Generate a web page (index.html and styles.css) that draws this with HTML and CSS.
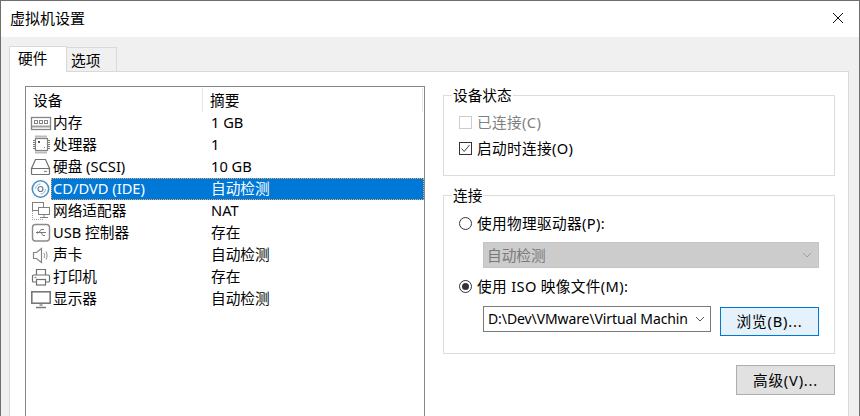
FILE: index.html
```html
<!DOCTYPE html>
<html lang="zh-CN">
<head>
<meta charset="utf-8">
<title>虚拟机设置</title>
<link rel="stylesheet" href="styles.css">
</head>
<body>
<div class="window">
  <header class="titlebar">
    <span class="title">虚拟机设置</span>
    <svg class="close" width="12" height="12" viewBox="0 0 12 12"><path d="M1 1 11 11M11 1 1 11" stroke="#111" fill="none"/></svg>
  </header>
  <div class="body">
    <div class="tabs">
      <div class="tab active">硬件</div>
      <div class="tab">选项</div>
    </div>
    <div class="panel">
      <div class="list">
        <div class="list-head"><span class="h-name">设备</span><span class="h-sum">摘要</span></div>
        <div class="row">
          <svg class="ico" viewBox="0 0 22 22"><g fill="none" stroke="#858585"><rect x="1.500" y="5.500" width="19" height="12" stroke-width="1.300"/><path d="M2 14.500h18" stroke="#a0a0a0" stroke-width="2"/><rect x="4.500" y="8.500" width="3" height="3"/><rect x="9.500" y="8.500" width="3" height="3"/><rect x="14.500" y="8.500" width="3" height="3"/></g></svg>
          <div class="cells"><span class="c-name">内存</span><span class="c-sum">1 GB</span></div>
        </div>
        <div class="row">
          <svg class="ico" viewBox="0 0 22 22"><g fill="none"><rect x="5.500" y="4.500" width="12" height="12" stroke="#808080" stroke-width="1.200"/><path d="M6 1.500v2M8 1.500v2M10 1.500v2M12 1.500v2M14 1.500v2M16 1.500v2M6 17.500v2M8 17.500v2M10 17.500v2M12 17.500v2M14 17.500v2M16 17.500v2M3 6.500h2M3 8.500h2M3 10.500h2M3 12.500h2M3 14.500h2M18 6.500h2M18 8.500h2M18 10.500h2M18 12.500h2M18 14.500h2" stroke="#777"/><rect x="8" y="7" width="2" height="2" fill="#555"/><rect x="14" y="13" width="1" height="1" fill="#888"/></g></svg>
          <div class="cells"><span class="c-name">处理器</span><span class="c-sum">1</span></div>
        </div>
        <div class="row">
          <svg class="ico" viewBox="0 0 22 22"><g fill="none" stroke="#707070" stroke-width="1.200"><path d="M5.500 3.500h10l4 9h-18z"/><rect x="1.500" y="12.500" width="18" height="6" rx="1"/><path d="M14 15.500h3" stroke="#888"/></g></svg>
          <div class="cells"><span class="c-name">硬盘 (SCSI)</span><span class="c-sum">10 GB</span></div>
        </div>
        <div class="row selected">
          <svg class="ico" viewBox="0 0 22 22"><g fill="none"><circle cx="10.500" cy="11" r="8.200" stroke="#4a90c2" stroke-width="1.600"/><circle cx="10.500" cy="11" r="2.500" stroke="#5f7f96" stroke-width="1.200"/><path d="M5.500 11a5 5 0 0 1 5-5M15.500 11a5 5 0 0 1-5 5" stroke="#8db8d6"/></g></svg>
          <div class="cells"><span class="c-name">CD/DVD (IDE)</span><span class="c-sum">自动检测</span></div>
        </div>
        <div class="row">
          <svg class="ico" viewBox="0 0 22 22"><g fill="none" stroke="#808080"><rect x="2.500" y="2.500" width="11" height="8"/><rect x="8.500" y="7.500" width="11" height="7" fill="#fff"/><path d="M14 15v2M10 17.500h8"/><path d="M2.500 11v8M2 19.500h12" stroke="#a0a0a0" stroke-dasharray="1 1"/></g></svg>
          <div class="cells"><span class="c-name">网络适配器</span><span class="c-sum">NAT</span></div>
        </div>
        <div class="row">
          <svg class="ico" viewBox="0 0 22 22"><g fill="none" stroke="#8a8a8a"><rect x="2.500" y="2.500" width="17" height="16.500" rx="3" stroke-width="1.400"/><path d="M6 10.500h10M9 10.500l2-3h3M11 10.500l2 3h2" stroke="#777"/><path d="M6 10.500l2-1.500v3z" fill="#777" stroke="none"/></g></svg>
          <div class="cells"><span class="c-name">USB 控制器</span><span class="c-sum">存在</span></div>
        </div>
        <div class="row">
          <svg class="ico" viewBox="0 0 22 22"><g fill="none" stroke="#858585"><path d="M3.500 8.500h3l5-4v14l-5-4h-3z" stroke-width="1.200"/><path d="M14 9c.8 1.700.8 3.300 0 5M16 7.500c1.400 2.600 1.400 5.400 0 8" stroke="#8a8a8a"/></g></svg>
          <div class="cells"><span class="c-name">声卡</span><span class="c-sum">自动检测</span></div>
        </div>
        <div class="row">
          <svg class="ico" viewBox="0 0 22 22"><g fill="none" stroke="#707070" stroke-width="1.200"><path d="M6.500 9V3.500h9V9"/><rect x="2.500" y="9" width="17" height="7" rx="1"/><rect x="6.500" y="13.500" width="9" height="5.500" fill="#fff"/><path d="M4.500 11.500h2" stroke="#888"/></g></svg>
          <div class="cells"><span class="c-name">打印机</span><span class="c-sum">存在</span></div>
        </div>
        <div class="row">
          <svg class="ico" viewBox="0 0 22 22"><g fill="none" stroke="#787878"><rect x="1.800" y="3.800" width="18.400" height="11.400" stroke-width="1.600"/><path d="M11 16v2" stroke-width="3" stroke="#a8a8a8"/><path d="M6 19.500h10" stroke-width="1.500"/></g></svg>
          <div class="cells"><span class="c-name">显示器</span><span class="c-sum">自动检测</span></div>
        </div>
      </div>
      <div class="side">
        <fieldset class="group group-state">
          <legend>设备状态</legend>
          <div class="opt disabled"><span class="box"></span>已连接(C)</div>
          <div class="opt">
            <span class="box on"><svg width="11" height="11" viewBox="0 0 11 11"><path d="M1.500 5.500 4.200 8.500 9.500 2" stroke="#444" fill="none"/></svg></span>启动时连接(O)
          </div>
        </fieldset>
        <fieldset class="group group-conn">
          <legend>连接</legend>
          <div class="opt"><span class="radio"></span>使用物理驱动器(P):</div>
          <div class="dropdown off">自动检测<svg class="chev" width="10" height="6" viewBox="0 0 10 6"><path d="M1 1 5 5 9 1" stroke="#a0a0a0" fill="none"/></svg></div>
          <div class="opt second"><span class="radio on"></span>使用 ISO 映像文件(M):</div>
          <div class="file-row">
            <div class="dropdown combo"><span class="path">D:\Dev\VMware\Virtual Machin</span><svg class="chev" width="10" height="6" viewBox="0 0 10 6"><path d="M1 1 5 5 9 1" stroke="#555" fill="none"/></svg></div>
            <div class="btn focus">浏览(B)...</div>
          </div>
        </fieldset>
        <div class="btn adv">高级(V)...</div>
      </div>
    </div>
  </div>
</div>
</body>
</html>
```

FILE: styles.css
```css
html, body { margin: 0; padding: 0; }
body {
  width: 860px;
  height: 416px;
  overflow: hidden;
  font: 14.67px/20px "Noto Sans", "Noto Sans CJK SC", sans-serif;
  color: #000;
}
.window {
  box-sizing: border-box;
  height: 416px;
  display: flex;
  flex-direction: column;
  border: 1px solid #6e6e6e;
  border-bottom: none;
  background: #fff;
}
.titlebar {
  box-sizing: border-box;
  height: 36px;
  flex: none;
  display: flex;
  align-items: center;
  justify-content: space-between;
  padding: 0 15px 2px 9px;
}
.title { font-size: 15px; }
.body {
  flex: 1;
  min-height: 0;
  display: flex;
  flex-direction: column;
  background: #f0f0f0;
  padding: 9px 10px 0 8px;
}
.tabs { display: flex; align-items: flex-end; flex: none; position: relative; z-index: 1; }
.tab {
  box-sizing: border-box;
  width: 50px;
  height: 24px;
  line-height: 24px;
  padding-left: 4px;
  border: 1px solid #d9d9d9;
  border-left: none;
  border-bottom: none;
}
.tab.active {
  width: 58px;
  height: 26px;
  margin-bottom: -1px;
  line-height: 23px;
  padding-left: 8px;
  border-left: 1px solid #d9d9d9;
  background: #fff;
}
.panel {
  flex: 1;
  min-height: 0;
  display: flex;
  gap: 18px;
  background: #fff;
  border: 1px solid #d9d9d9;
  border-bottom: none;
  padding: 14px 13px 0 15px;
}
.list {
  box-sizing: border-box;
  width: 400px;
  flex: none;
  border: 1px solid #828790;
  border-bottom: none;
}
.list-head { display: flex; height: 25px; align-items: center; line-height: 25px; }
.h-name { box-sizing: border-box; width: 177px; height: 24px; padding-left: 7px; border-right: 1px solid #e5e5e5; }
.h-sum { box-sizing: border-box; flex: 1; height: 24px; padding-left: 7px; margin-right: 1px; border-right: 1px solid #e5e5e5; }
.row { display: flex; height: 22px; }
.ico { width: 22px; height: 22px; flex: none; margin: 0 -1px 0 4px; }
.cells { flex: 1; display: flex; line-height: 21px; }
.c-name { box-sizing: border-box; width: 152px; padding-left: 2px; }
.c-sum { flex: 1; padding-left: 8px; }
.selected .cells {
  background: #0078d7;
  color: #fff;
  outline: 1px dotted #f0a860;
  outline-offset: -1px;
}
.side { width: 392px; flex: none; display: flex; flex-direction: column; }
.group {
  margin: 0;
  min-width: 0;
  border: 1px solid #dcdcdc;
  padding: 0 15px;
}
.group legend { padding: 0 1px; margin-left: -7px; height: 19px; line-height: 19px; }
.group-state { height: 90px; box-sizing: border-box; padding-top: 7px; margin-bottom: 10px; }
.group-conn { height: 168px; box-sizing: border-box; padding-top: 8px; }
.opt { display: flex; align-items: flex-start; height: 22px; gap: 5px; line-height: 20px; letter-spacing: .35px; }
.group-state .opt + .opt { margin-top: 4px; }
.opt.second { margin-top: 8px; }
.disabled { color: #808080; }
.box {
  box-sizing: border-box;
  width: 13px;
  height: 13px;
  flex: none;
  margin-top: 4px;
  border: 1px solid #cccccc;
  display: flex;
  align-items: center;
  justify-content: center;
}
.box.on { border-color: #333; }
.radio {
  box-sizing: border-box;
  width: 13px;
  height: 13px;
  flex: none;
  margin-top: 4px;
  border: 1px solid #333;
  border-radius: 50%;
  display: flex;
  align-items: center;
  justify-content: center;
}
.radio.on::after {
  content: "";
  width: 7px;
  height: 7px;
  border-radius: 50%;
  background: #333;
}
.dropdown {
  box-sizing: border-box;
  height: 26px;
  margin-left: 24px;
  width: 336px;
  display: flex;
  align-items: center;
  justify-content: space-between;
  padding: 0 6px 0 3px;
}
.dropdown.off {
  margin-top: 7px;
  background: #cccccc;
  border: 1px solid #c4c4c4;
  color: #7a7a7a;
}
.dropdown.combo {
  margin-left: 0;
  width: 228px;
  border: 1px solid #7a7a7a;
  background: #fff;
  padding: 0 5px 0 4px;
}
.path { white-space: nowrap; overflow: hidden; font-size: 14px; letter-spacing: -.1px; }
.chev { flex: none; }
.file-row { display: flex; align-items: flex-start; gap: 9px; margin: 8px 0 0 24px; }
.btn {
  box-sizing: border-box;
  width: 99px;
  height: 30px;
  line-height: 28px;
  text-align: center;
  letter-spacing: .8px;
  border: 1px solid #adadad;
  background: #e1e1e1;
}
.btn.focus {
  background: #e5f1fb;
  border-color: #0078d7;
  margin-top: 1px;
  height: 29px;
  line-height: 27px;
}
.btn.adv { align-self: flex-end; margin-top: 11px; }
```
